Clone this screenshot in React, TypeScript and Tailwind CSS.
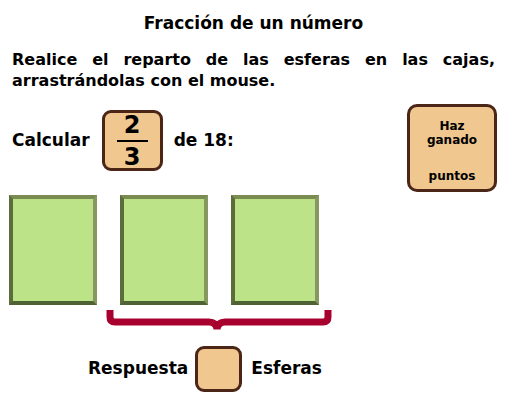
const font = { fontFamily: '"DejaVu Sans", "Liberation Sans", sans-serif' };

function GreenBox() {
  return (
    <div className="h-[110px] w-[88px] border-[4px] border-t-[#7b8c53] border-l-[#5a6d3b] border-b-[#4f6233] border-r-[#86985f] bg-[#bde389]" />
  );
}

function Brace() {
  return (
    <svg width="226" height="26" viewBox="0 0 226 26" className="block">
      <path
        d="M4 1 V8 Q4 13 9 13 H103 Q110 13 111 20 Q112 13 119 13 H217 Q222 13 222 8 V1"
        fill="none"
        stroke="#a8002f"
        strokeWidth="7"
      />
    </svg>
  );
}

export default function App() {
  return (
    <div className="h-[407px] w-[507px] bg-white text-black font-bold" style={font}>
      <h1 className="pt-[12px] text-center text-[17px] leading-[22px]">Fracción de un número</h1>

      <p className="mx-[12px] mt-[15px] text-justify text-[16px] leading-[21px]">
        Realice el reparto de las esferas en las cajas, arrastrándolas con el mouse.
      </p>

      <div className="mt-[13px] flex items-start justify-between pl-[12px] pr-[10px]">
        <div className="mt-[6px] flex items-center text-[17px]">
          <span>Calcular</span>
          <div className="ml-[12px] flex h-[61px] w-[61px] flex-col items-center justify-center rounded-[9px] border-[3px] border-[#4b2617] bg-[#efc78f] text-[24px] leading-[24px]">
            <span>2</span>
            <span className="my-[3px] block h-[2px] w-[31px] shrink-0 bg-black" />
            <span>3</span>
          </div>
          <span className="ml-[11px]">de 18:</span>
        </div>

        <div className="flex h-[88px] w-[90px] flex-col items-center rounded-[10px] border-[3px] border-[#4b2617] bg-[#efc78f] pt-[12px] text-[12px] leading-[14px]">
          <span>Haz</span>
          <span>ganado</span>
          <span className="mt-auto mb-[6px]">puntos</span>
        </div>
      </div>

      <div className="mt-[3px] flex gap-[23px] pl-[9px]">
        <GreenBox />
        <GreenBox />
        <GreenBox />
      </div>

      <div className="mt-[4px] pl-[106px]">
        <Brace />
      </div>

      <div className="mt-[11px] flex items-center pl-[88px] text-[17px]">
        <span>Respuesta</span>
        <div className="ml-[7px] h-[46px] w-[47px] rounded-[9px] border-[3px] border-[#4b2617] bg-[#efc78f]" />
        <span className="ml-[9px]">Esferas</span>
      </div>
    </div>
  );
}
